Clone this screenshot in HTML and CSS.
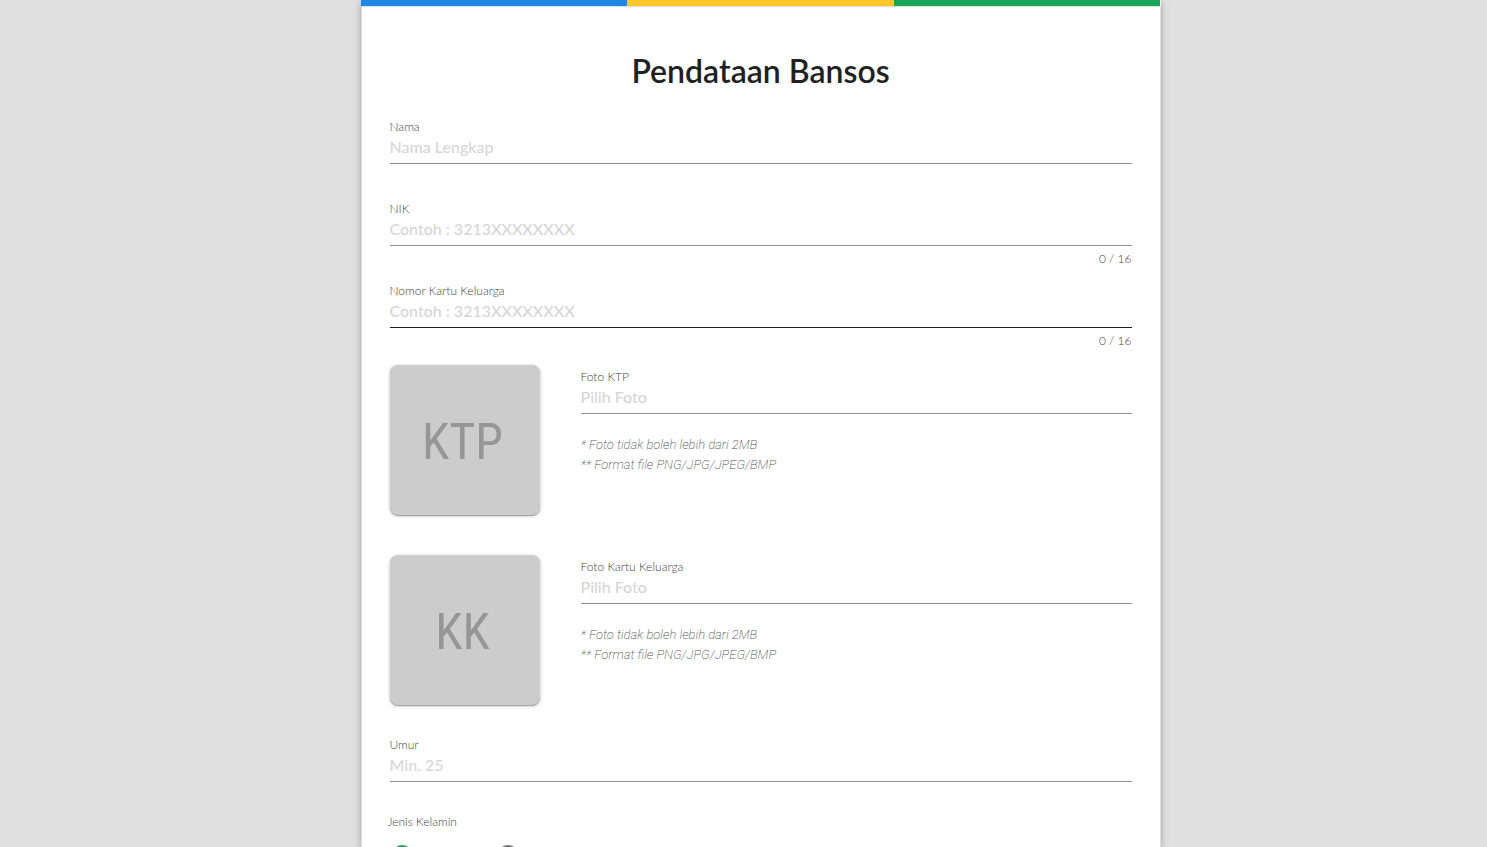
FILE: index.html
```html
<!DOCTYPE html>
<html lang="id">
<head>
<meta charset="utf-8">
<meta name="viewport" content="width=device-width, initial-scale=1">
<title>Pendataan Bansos</title>
<link rel="stylesheet" href="styles.css">
</head>
<body>
<main class="page">
  <form class="card">
    <div class="stripe"><span class="stripe-blue"></span><span class="stripe-yellow"></span><span class="stripe-green"></span></div>
    <div class="content">
      <h1 class="title">Pendataan Bansos</h1>
      <div class="field">
        <label class="label" for="nama">Nama</label>
        <input class="input" id="nama" type="text" placeholder="Nama Lengkap">
      </div>
      <div class="field">
        <label class="label" for="nik">NIK</label>
        <input class="input" id="nik" type="text" maxlength="16" placeholder="Contoh : 3213XXXXXXXX">
        <span class="counter">0 / 16</span>
      </div>
      <div class="field">
        <label class="label" for="kk">Nomor Kartu Keluarga</label>
        <input class="input input-active" id="kk" type="text" maxlength="16" placeholder="Contoh : 3213XXXXXXXX">
        <span class="counter">0 / 16</span>
      </div>
      <div class="uploads">
        <div class="upload">
          <div class="preview">KTP</div>
          <div class="upload-body">
            <label class="label" for="foto-ktp">Foto KTP</label>
            <input class="input" id="foto-ktp" type="text" placeholder="Pilih Foto" readonly>
            <p class="note">* Foto tidak boleh lebih dari 2MB<br>** Format file PNG/JPG/JPEG/BMP</p>
          </div>
        </div>
        <div class="upload">
          <div class="preview">KK</div>
          <div class="upload-body">
            <label class="label" for="foto-kk">Foto Kartu Keluarga</label>
            <input class="input" id="foto-kk" type="text" placeholder="Pilih Foto" readonly>
            <p class="note">* Foto tidak boleh lebih dari 2MB<br>** Format file PNG/JPG/JPEG/BMP</p>
          </div>
        </div>
      </div>
      <div class="field field-last">
        <label class="label" for="umur">Umur</label>
        <input class="input" id="umur" type="text" inputmode="numeric" placeholder="Min. 25">
      </div>
      <fieldset class="gender">
        <legend class="label">Jenis Kelamin</legend>
        <div class="options">
          <input class="radio" type="radio" name="gender" aria-label="Laki-laki" checked>
          <input class="radio" type="radio" name="gender" aria-label="Perempuan">
        </div>
      </fieldset>
    </div>
  </form>
</main>
</body>
</html>
```
FILE: styles.css
```css
* {
  box-sizing: border-box;
}

body {
  margin: 0;
  background: #e0e0e0;
  color: #212121;
  font-family: Lato, "Open Sans", sans-serif;
  font-size: 16px;
  line-height: 20px;
}

.page {
  display: flex;
  justify-content: center;
  height: 100vh;
  padding-left: 34px;
  overflow: hidden;
}

.card {
  width: 100%;
  max-width: 800px;
  background: #fff;
  box-shadow: 0 3px 5px rgba(0, 0, 0, 0.2), 0 1px 10px rgba(0, 0, 0, 0.12);
}

.stripe {
  display: grid;
  grid-template-columns: repeat(3, 1fr);
  height: 6px;
}

.stripe-blue {
  background: #1e88e5;
}

.stripe-yellow {
  background: #ffca28;
}

.stripe-green {
  background: #18a558;
}

.content {
  padding: 44px 28px;
  border: 1px solid #e0e0e0;
}

.title {
  margin: 0 0 28px;
  font-size: 32px;
  font-weight: 600;
  line-height: 40px;
  text-align: center;
}

.field {
  display: flex;
  flex-direction: column;
  height: 82px;
}

.field-last {
  height: 77px;
}

.label {
  font-size: 12px;
  font-weight: 300;
  line-height: 16px;
  color: #444;
}

.input {
  width: 100%;
  height: 29px;
  padding: 0 0 6px;
  border: 0;
  border-bottom: 1px solid #8f8f8f;
  background: transparent;
  color: #212121;
  font: 500 16px/20px Lato, "Open Sans", sans-serif;
  outline: 0;
}

.input::placeholder {
  color: #d6d6d6;
  opacity: 1;
}

.input-active {
  border-bottom-color: #212121;
}

.counter {
  align-self: flex-end;
  margin-top: 5px;
  color: #444;
  font-size: 12px;
  font-weight: 300;
  line-height: 16px;
}

.uploads {
  display: grid;
  gap: 40px;
  margin-bottom: 32px;
}

.upload {
  display: flex;
  gap: 41px;
}

.upload-body {
  flex: 1;
  display: flex;
  flex-direction: column;
  padding-top: 4px;
}

.preview {
  display: flex;
  align-items: center;
  justify-content: center;
  width: 150px;
  height: 150px;
  padding-top: 4px;
  padding-right: 4px;
  border-radius: 8px;
  background: #ccc;
  color: #969696;
  font: 50px/60px "Liberation Sans Narrow", "Roboto Condensed", "Liberation Sans", sans-serif;
  box-shadow: 0 1px 1px rgba(0, 0, 0, 0.3), 0 1px 4px rgba(0, 0, 0, 0.2);
}

.note {
  margin: 21px 0 0;
  color: #555;
  font-family: Roboto, sans-serif;
  font-size: 13px;
  font-style: italic;
  font-weight: 200;
  line-height: 20px;
}

.gender {
  margin: 0 -2px;
  padding: 0;
  border: 0;
}

.gender .label {
  padding: 0;
}

.options {
  display: flex;
  gap: 86px;
  padding: 15px 4px 0;
}

.radio {
  appearance: none;
  width: 20px;
  height: 20px;
  margin: 0;
  border: 2px solid #757575;
  border-radius: 50%;
}

.radio:checked {
  border-color: #18a558;
  background: radial-gradient(circle, #18a558 5px, transparent 6px);
}
```
